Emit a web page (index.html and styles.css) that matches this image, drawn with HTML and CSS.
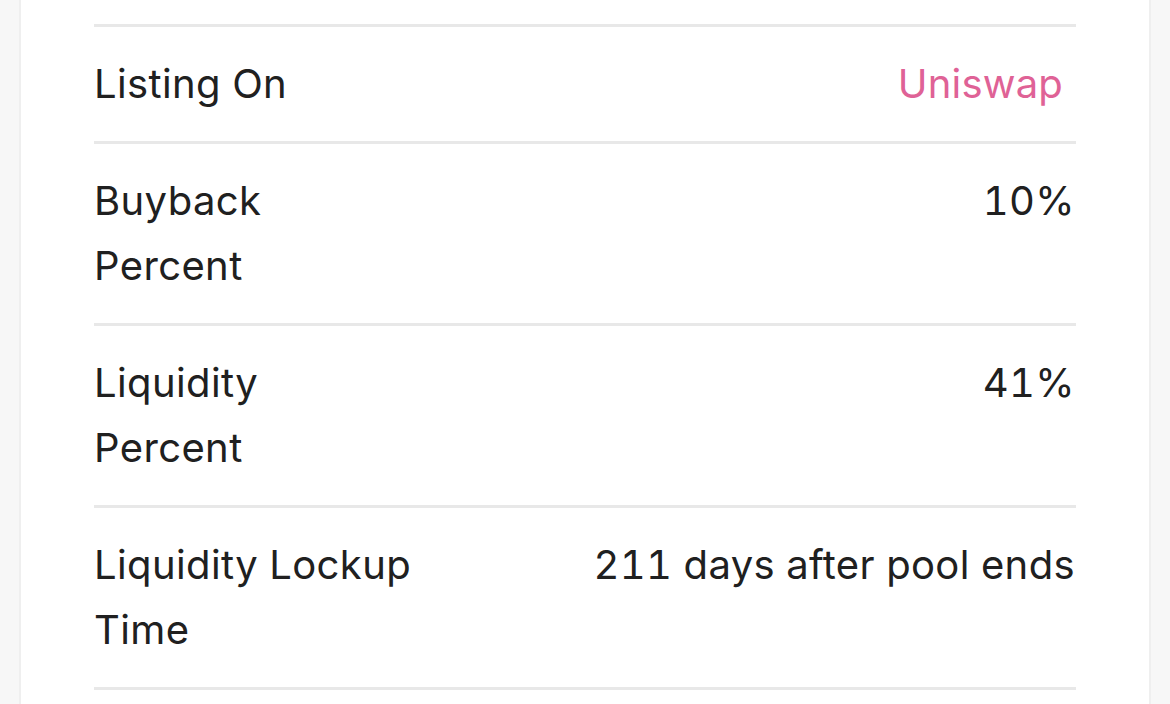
FILE: index.html
```html
<!DOCTYPE html>
<html>
<head>
<meta charset="utf-8">
<link rel="stylesheet" href="styles.css">
</head>
<body>
<div class="page">
  <div class="card">
    <div class="list">
      <div class="row">
        <div class="label">Listing On</div>
        <div class="value"><a class="link">Uniswap</a></div>
      </div>
      <div class="row">
        <div class="label">Buyback<br>Percent</div>
        <div class="value">10%</div>
      </div>
      <div class="row">
        <div class="label">Liquidity<br>Percent</div>
        <div class="value">41%</div>
      </div>
      <div class="row">
        <div class="label">Liquidity Lockup<br>Time</div>
        <div class="value">211 days after pool ends</div>
      </div>
    </div>
  </div>
</div>
</body>
</html>
```

FILE: styles.css
```css
html, body {
  margin: 0;
  padding: 0;
  background: #f7f7f7;
}
.page {
  width: 1170px;
  height: 704px;
  overflow: hidden;
  padding: 0 19px 0 19px;
  box-sizing: border-box;
}
.card {
  background: #ffffff;
  border-left: 2px solid #efefef;
  border-right: 2px solid #efefef;
  height: 100%;
  padding: 24px 73px 0 73px;
  box-sizing: border-box;
}
.list {
  border-top: 3px solid #e8e8e8;
}
.row {
  display: flex;
  justify-content: space-between;
  align-items: flex-start;
  padding: 24px 0 25px 0;
  border-bottom: 3px solid #e8e8e8;
  font-family: Inter, "Noto Sans", sans-serif;
  font-size: 40px;
  line-height: 65px;
  letter-spacing: 0.38px;
  font-variant-numeric: tabular-nums;
  color: #202020;
}
.value {
  margin-right: 1px;
}
.link {
  color: #df6296;
  padding-right: 12px;
  letter-spacing: 0.2px;
}
```
